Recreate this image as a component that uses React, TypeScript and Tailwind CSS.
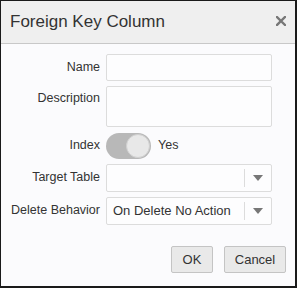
import React from "react";

function Select({ value }: { value?: string }) {
  return (
    <div className="flex h-[28px] w-[166px] items-stretch rounded-[2px] border border-[#dcdcdc] bg-[#fdfdfe]">
      <div className="flex flex-1 items-center pl-[6px] text-[13px] text-[#333]">{value}</div>
      <div className="my-[4px] w-px bg-[#dcdcdc]" />
      <div className="flex w-[26px] items-center justify-center">
        <svg width="10" height="6" viewBox="0 0 10 6">
          <path d="M0 0 L10 0 L5 6 Z" fill="#777" />
        </svg>
      </div>
    </div>
  );
}

function Label({ children }: { children: React.ReactNode }) {
  return (
    <div className="flex h-[27px] items-center justify-end text-[12.5px] text-[#333]">{children}</div>
  );
}

export default function App() {
  return (
    <div
      className="flex h-[288px] w-[297px] flex-col border-t border-l border-r-2 border-b-2 border-[#1a1a1a] bg-[#fbfbfd]"
      style={{ fontFamily: '"Liberation Sans", Arial, sans-serif' }}
    >
      <div className="flex h-[43px] shrink-0 items-center justify-between border-b border-[#c8c8c8] bg-[#efefef] pl-[9px] pr-[9px]">
        <div className="text-[17px] text-[#333]">Foreign Key Column</div>
        <svg width="10" height="10" viewBox="0 0 10 10" className="mb-[2px]">
          <path d="M1 1 L9 9 M9 1 L1 9" stroke="#777" strokeWidth="2.4" strokeLinecap="square" />
        </svg>
      </div>
      <div className="grid grid-cols-[99px_166px] gap-x-[6px] gap-y-[5px] pt-[10px]">
        <Label>Name</Label>
        <div className="h-[27px] rounded-[2px] border border-[#dcdcdc] bg-[#fdfdfe]" />
        <div className="flex h-[27px] items-start justify-end pt-[3px] text-[12.5px] text-[#333]">Description</div>
        <div className="h-[41px] rounded-[2px] border border-[#dcdcdc] bg-[#fdfdfe]" />
        <Label>Index</Label>
        <div className="flex h-[27px] items-center gap-[7px]">
          <div className="relative h-[26px] w-[45px] rounded-full bg-[#b8b8b8]">
            <div className="absolute right-[1px] top-[1px] h-[24px] w-[24px] rounded-full border border-[#d0d0d0] bg-[#e8e8e8]" />
          </div>
          <span className="text-[12.5px] text-[#333]">Yes</span>
        </div>
        <Label>Target Table</Label>
        <Select />
        <Label>Delete Behavior</Label>
        <Select value="On Delete No Action" />
      </div>
      <div className="mt-auto flex justify-end gap-[11px] pb-[13px] pr-[9px]">
        <button className="h-[27px] w-[42px] rounded-[2px] border border-[#c4c4c4] bg-[#e9e9e9] text-[13px] text-[#333]">
          OK
        </button>
        <button className="h-[27px] w-[62px] rounded-[2px] border border-[#c4c4c4] bg-[#e9e9e9] text-[13px] text-[#333]">
          Cancel
        </button>
      </div>
    </div>
  );
}
